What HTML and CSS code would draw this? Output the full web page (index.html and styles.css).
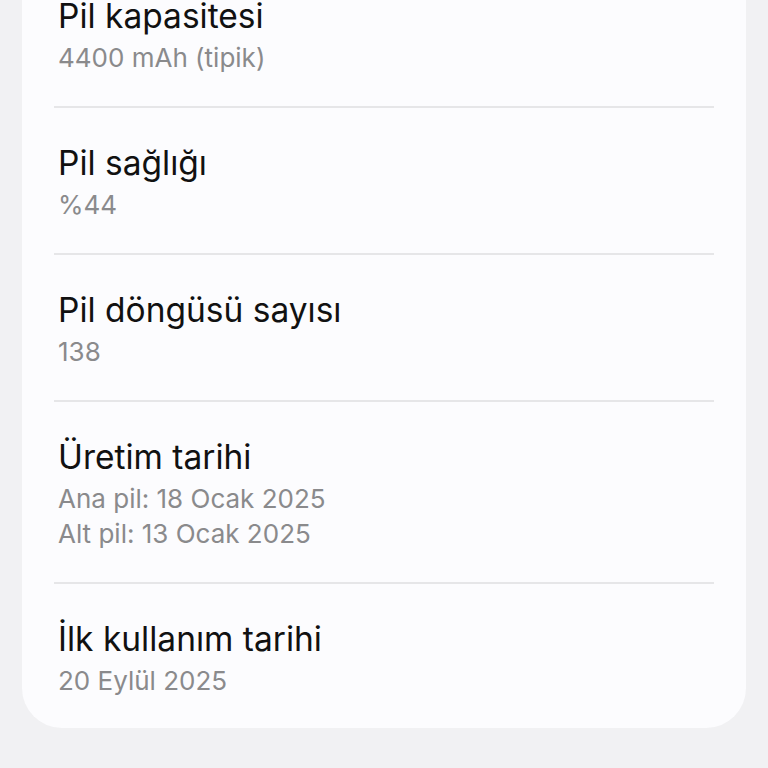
FILE: index.html
```html
<!DOCTYPE html>
<html lang="tr">
<head>
<meta charset="utf-8">
<link rel="stylesheet" href="styles.css">
</head>
<body>
<div class="card">
  <div class="row">
    <div class="title">Pil kapasitesi</div>
    <div class="sub">4400 mAh (tipik)</div>
  </div>
  <div class="row">
    <div class="title">Pil sağlığı</div>
    <div class="sub">%44</div>
  </div>
  <div class="row">
    <div class="title">Pil döngüsü sayısı</div>
    <div class="sub">138</div>
  </div>
  <div class="row">
    <div class="title">Üretim tarihi</div>
    <div class="sub">Ana pil: 18 Ocak 2025</div>
    <div class="sub">Alt pil: 13 Ocak 2025</div>
  </div>
  <div class="row">
    <div class="title">İlk kullanım tarihi</div>
    <div class="sub">20 Eylül 2025</div>
  </div>
</div>
</body>
</html>
```
FILE: styles.css
```css
html, body {
  margin: 0;
  padding: 0;
  background: #f1f1f3;
  height: 100%;
}
body {
  font-family: Inter, Roboto, "Noto Sans", sans-serif;
  overflow: hidden;
}
.card {
  margin: -40px 22px 0 22px;
  background: #fcfcfe;
  border-radius: 0 0 40px 40px;
  padding: 0 32px;
}
.row {
  padding: 35px 0 31px 4px;
  border-top: 2px solid #e6e6e8;
}
.row:first-child {
  border-top: none;
  padding-top: 36px;
}
.row:last-child {
  padding-bottom: 30px;
}
.title {
  font-size: 33.5px;
  line-height: 40px;
  color: #111111;
  margin-bottom: 4px;
}
.sub {
  font-size: 26px;
  line-height: 35px;
  color: #8a8a8c;
}
```
